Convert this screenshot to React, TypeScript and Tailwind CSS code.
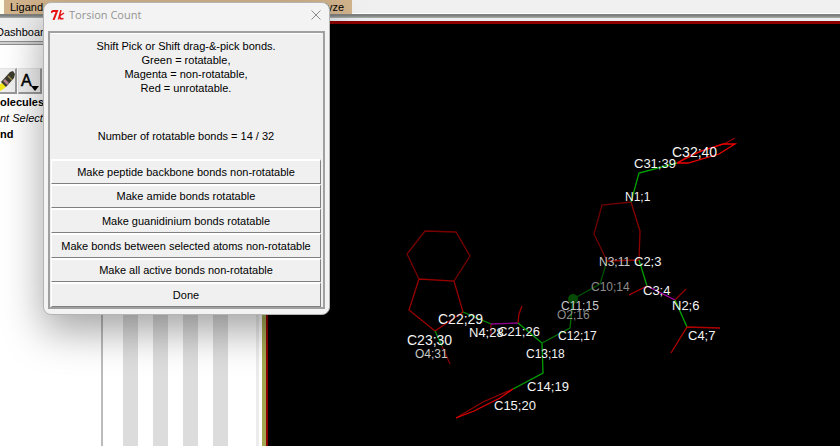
import React from "react";

type Tone = "bright" | "mid" | "dim";

interface AtomLabel {
  text: string;
  x: number;
  y: number;
  size: 12 | 13 | 14;
  tone: Tone;
}

const toneFill: Record<Tone, string> = {
  bright: "#f4f4f4",
  mid: "#c8c8c8",
  dim: "#8c8c8c",
};

const labels: AtomLabel[] = [
  { text: "C32;40", x: 672, y: 157, size: 14, tone: "bright" },
  { text: "C31;39", x: 634, y: 168, size: 13, tone: "bright" },
  { text: "N1;1", x: 625, y: 201, size: 12, tone: "bright" },
  { text: "N3;11", x: 599, y: 266, size: 12, tone: "mid" },
  { text: "C2;3", x: 634, y: 266, size: 13, tone: "bright" },
  { text: "C10;14", x: 591, y: 291, size: 12, tone: "dim" },
  { text: "C3;4", x: 643, y: 295, size: 13, tone: "bright" },
  { text: "C11;15", x: 561, y: 310, size: 12, tone: "mid" },
  { text: "O2;16", x: 557, y: 319, size: 12, tone: "dim" },
  { text: "N2;6", x: 672, y: 310, size: 13, tone: "bright" },
  { text: "C12;17", x: 558, y: 340, size: 12, tone: "bright" },
  { text: "C4;7", x: 688, y: 340, size: 13, tone: "bright" },
  { text: "C22;29", x: 438, y: 324, size: 14, tone: "bright" },
  { text: "N4;28", x: 469, y: 337, size: 13, tone: "bright" },
  { text: "C21;26", x: 498, y: 336, size: 13, tone: "bright" },
  { text: "C23;30", x: 407, y: 345, size: 14, tone: "bright" },
  { text: "O4;31", x: 415, y: 358, size: 12, tone: "mid" },
  { text: "C13;18", x: 526, y: 358, size: 12, tone: "bright" },
  { text: "C14;19", x: 527, y: 391, size: 13, tone: "bright" },
  { text: "C15;20", x: 494, y: 410, size: 13, tone: "bright" },
];

const bonds: { points: string; color: string }[] = [
  { points: "419,279 407,254 425,231 456,232 470,256 454,281", color: "#780000" },
  { points: "435,331 409,310 419,279 454,281 463,312", color: "#980000" },
  { points: "463,312 435,331", color: "#a80000" },
  { points: "435,331 442,346", color: "#008c00" },
  { points: "442,346 450,364", color: "#800000" },
  { points: "463,312 491,324", color: "#009000" },
  { points: "491,324 491,336", color: "#900000" },
  { points: "491,324 518,323", color: "#900090" },
  { points: "518,323 519,314 522,306", color: "#a00000" },
  { points: "518,323 542,343 543,373 513,389", color: "#00a000" },
  { points: "542,343 570,328 573,299", color: "#007000" },
  { points: "573,299 600,284 607,261", color: "#005000" },
  { points: "513,389 483,402 456,418", color: "#900000" },
  { points: "513,389 500,398 474,411 456,418", color: "#e00000" },
  { points: "607,261 594,234 602,205 631,202", color: "#700000" },
  { points: "631,202 640,231 639,260 607,261", color: "#8c0000" },
  { points: "631,202 639,173 677,163", color: "#00a000" },
  { points: "677,163 690,155 724,144 735,138", color: "#980000" },
  { points: "677,163 688,163 719,154 735,144 723,144 701,151 677,163", color: "#f00000" },
  { points: "639,260 647,286", color: "#00a000" },
  { points: "647,286 629,295", color: "#b00000" },
  { points: "647,286 675,300", color: "#b000b0" },
  { points: "675,300 686,289", color: "#900000" },
  { points: "675,300 687,327", color: "#00a800" },
  { points: "720,328 687,327 671,353", color: "#b00000" },
];

const actions = [
  "Make peptide backbone bonds non-rotatable",
  "Make amide bonds rotatable",
  "Make guanidinium bonds rotatable",
  "Make bonds between selected atoms non-rotatable",
  "Make all active bonds non-rotatable",
  "Done",
];

function MoleculeView() {
  return (
    <svg
      className="block h-[422px] w-[572px] max-w-none"
      viewBox="268 24 572 422"
      role="img"
      aria-label="Molecule"
    >
      {bonds.map((b, i) => (
        <polyline key={i} points={b.points} fill="none" stroke={b.color} strokeWidth="1.3" />
      ))}
      <circle cx="573" cy="299" r="5" fill="#064a06" />
      {labels.map((l) => (
        <text
          key={l.text}
          x={l.x}
          y={l.y}
          fontSize={l.size}
          fill={toneFill[l.tone]}
          fontFamily="'Liberation Sans', Arial, sans-serif"
        >
          {l.text}
        </text>
      ))}
    </svg>
  );
}

function MenuBar() {
  return (
    <header className="flex h-[14px] shrink-0 bg-[#f0f0f0]">
      <div className="w-1 bg-[#fffff0]" />
      <nav className="flex h-full w-[348px] justify-between bg-[#d2b48c] pr-2 pl-[6px] leading-[14px]">
        <button type="button">Ligand</button>
        <button type="button">Analyze</button>
      </nav>
      <div className="flex-1 border-b border-white" />
    </header>
  );
}

function Sidebar() {
  return (
    <aside className="flex w-[262px] shrink-0 flex-col bg-white">
      <div className="h-[23px] bg-[#f0f0f0] pt-1">
        <button type="button" className="-ml-1 block leading-5">
          Dashboard
        </button>
      </div>
      <div className="h-1 shrink-0 border-y border-[#8f8f8f] bg-[#d0d0d0]" />
      <div className="flex min-h-0 flex-1">
        <div className="w-[101px] shrink-0 overflow-hidden whitespace-nowrap">
          <div className="mt-[23px] flex h-[26px] gap-px">
            <button
              type="button"
              aria-label="Edit"
              className="w-[17px] border-r-2 border-b-2 border-t border-[#9a9a9a] border-t-[#e4e4e4] bg-[#efefef]"
            >
              <svg viewBox="0 0 15 23" className="h-[23px] w-[15px]">
                <path d="M0 15 3 14 6 18 2 21 0 22Z" fill="#f0e818" />
                <path d="M1 13 10 3 13 2 15 5 14 9 6 18Z" fill="#3a3a2c" />
                <path d="M3 12 7 16 9 14 5 10Z" fill="#b5838c" />
                <path d="m8 7 4 4" stroke="#9d8c4a" strokeWidth="1.5" />
              </svg>
            </button>
            <button
              type="button"
              aria-label="Label"
              className="w-6 border-r-2 border-b-2 border-l border-t border-[#9a9a9a] border-t-[#e4e4e4] border-l-[#e4e4e4] bg-[#efefef]"
            >
              <span className="flex h-full items-center pl-[2px] text-[16px] leading-4 [-webkit-text-stroke:0.5px]">
                A
                <svg viewBox="0 0 8 5" className="mt-4 -ml-px h-[5px] w-2 shrink-0">
                  <path d="M0 0H8L4 5Z" />
                </svg>
              </span>
            </button>
            <div className="w-6 border-l border-[#b0b0b0] bg-[#efefef]" />
          </div>
          <div className="leading-4">
            <p className="font-bold">olecules</p>
            <p className="italic">nt Selecti</p>
            <p className="font-bold">nd</p>
          </div>
        </div>
        <div className="w-[2px] bg-[#bcbcbc]" />
        <div className="flex flex-1 gap-[15px] pl-5">
          <div className="w-[15px] bg-[#dcdcdc]" />
          <div className="w-[15px] bg-[#dcdcdc]" />
          <div className="w-[15px] bg-[#dcdcdc]" />
          <div className="w-[15px] bg-[#dcdcdc]" />
        </div>
        <div className="mr-[3px] w-[3px] bg-[#ececec]" />
      </div>
    </aside>
  );
}

function TorsionDialog() {
  return (
    <section
      role="dialog"
      aria-labelledby="dialog-title"
      className="absolute top-[2px] left-[43px] w-[287px] rounded-lg border border-[#b4b4b4] bg-[#f3f3f3] px-1 pb-[5px] shadow-[0_16px_40px_rgba(0,0,0,0.36)]"
    >
      <div className="flex h-7 items-center pt-px pr-1 pl-[3px] pb-[5px]">
        <svg viewBox="0 0 14 10" className="h-[10px] w-[14px]" fill="none" stroke="#e81010" strokeWidth="1.5">
          <path d="M0 2.5 2 1 6 1 2.500 10" strokeWidth="2" />
          <path d="M10 0 7.500 9.500M13 3 8.500 6 10 9 12.500 8.500" />
        </svg>
        <h1
          id="dialog-title"
          className="ml-1 flex-1 font-['Open_Sans',sans-serif] text-[11px] text-[#939393]"
        >
          Torsion Count
        </h1>
        <button type="button" aria-label="Close">
          <svg viewBox="0 0 10 10" className="h-[10px] w-[10px]" stroke="#8c8c8c">
            <path d="m.5.5 9 9m0-9-9 9" />
          </svg>
        </button>
      </div>
      <div className="border-2 border-[#a0a0a0] bg-[#f0f0f0] pl-px pr-[2px]">
        <div className="flex h-[126px] flex-col border-t border-white pt-[5px] text-center leading-[14px]">
          <p>Shift Pick or Shift drag-&amp;-pick bonds.</p>
          <p>Green = rotatable,</p>
          <p>Magenta = non-rotatable,</p>
          <p>Red = unrotatable.</p>
          <p className="mt-[34px]">Number of rotatable bonds = 14 / 32</p>
        </div>
        <div className="grid h-[148px] grid-cols-1 grid-rows-6">
          {actions.map((label) => (
            <button
              key={label}
              type="button"
              className="flex min-w-0 items-center justify-center border-t-2 border-r border-b border-l border-t-white border-r-[#808080] border-b-[#808080] border-l-white whitespace-nowrap"
            >
              {label}
            </button>
          ))}
        </div>
      </div>
    </section>
  );
}

export default function App() {
  return (
    <div className="relative flex h-screen flex-col overflow-hidden bg-[#f0f0f0] font-['Liberation_Sans',Arial,sans-serif] text-[11px] text-black">
      <MenuBar />
      <div className="h-1 shrink-0 border-t-2 border-b border-t-[#7e827f] border-b-[#a3a7a4] bg-[#8d918e]" />
      <div className="flex min-h-0 flex-1">
        <Sidebar />
        <main className="flex min-w-0 flex-1 flex-col">
          <div className="h-[3px] shrink-0 bg-[#e9edf0]" />
          <div className="flex min-h-0 flex-1">
            <div className="w-1 shrink-0 bg-[#a3a850]" />
            <div className="min-w-0 flex-1 overflow-hidden border-t-[3px] border-l-2 border-[#8c0000] bg-black">
              <MoleculeView />
            </div>
          </div>
        </main>
      </div>
      <TorsionDialog />
    </div>
  );
}
